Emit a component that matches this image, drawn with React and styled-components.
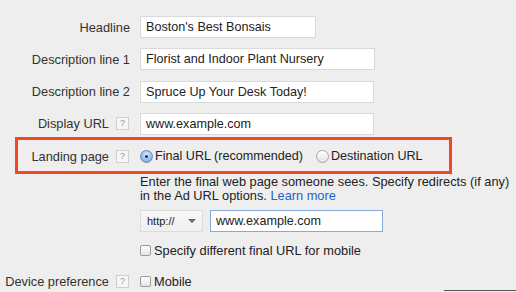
import { styled, createGlobalStyle } from 'styled-components';

const GlobalStyle = createGlobalStyle`
  html, body {
    margin: 0;
    padding: 0;
    background: #eeeeee;
  }
  body {
    font-family: 'Liberation Sans', Arial, sans-serif;
    color: #222;
    -webkit-font-smoothing: antialiased;
  }
`;

const HelpIcon = () => <Help>?</Help>;

const App = () => {
  return (
    <Page>
      <GlobalStyle />
      <Row>
        <Label>Headline</Label>
        <TextInput width={176} defaultValue="Boston's Best Bonsais" />
      </Row>
      <Row>
        <Label>Description line 1</Label>
        <TextInput width={235} defaultValue="Florist and Indoor Plant Nursery" />
      </Row>
      <Row>
        <Label>Description line 2</Label>
        <TextInput width={234} defaultValue="Spruce Up Your Desk Today!" />
      </Row>
      <Row>
        <Label>
          Display URL <HelpIcon />
        </Label>
        <TextInput width={234} defaultValue="www.example.com" />
      </Row>
      <Row highlighted>
        <Label>
          Landing page <HelpIcon />
        </Label>
        <Options>
          <Option>
            <Radio checked />
            Final URL (recommended)
          </Option>
          <Option>
            <Radio />
            Destination URL
          </Option>
        </Options>
      </Row>
      <Indented>
        <HelpText>
          Enter the final web page someone sees. Specify redirects (if any)
          <br />
          in the Ad URL options. <Link href="#">Learn more</Link>
        </HelpText>
        <UrlFields>
          <Select>
            <span>http://</span>
            <Caret />
          </Select>
          <TextInput width={173} focused defaultValue="www.example.com" />
        </UrlFields>
        <CheckRow>
          <Checkbox />
          Specify different final URL for mobile
        </CheckRow>
      </Indented>
      <Row last>
        <Label>
          Device preference <HelpIcon />
        </Label>
        <CheckRow>
          <Checkbox />
          Mobile
        </CheckRow>
        <Edge />
      </Row>
    </Page>
  );
};

export default App;

const Page = styled.div`
  width: 516px;
  height: 292px;
  overflow: hidden;
  padding-top: 16px;
  box-sizing: border-box;
  font-size: 12px;
`;

const Row = styled.div`
  display: flex;
  align-items: center;
  gap: 10px;
  height: ${({ last }) => (last ? '21px' : '22px')};
  margin-bottom: 10.3px;
  margin-top: ${({ highlighted, last }) =>
    highlighted ? '1px' : last ? '9.5px' : '0'};
  position: relative;

  &::before {
    content: '';
    display: ${({ highlighted }) => (highlighted ? 'block' : 'none')};
    position: absolute;
    left: 15px;
    top: -8px;
    width: 437px;
    height: 37px;
    box-sizing: border-box;
    border: 3.5px solid #f2471f;
    pointer-events: none;
  }
`;

const Label = styled.div`
  width: 130px;
  flex-shrink: 0;
  display: flex;
  justify-content: flex-end;
  align-items: center;
  gap: 7px;
  color: #333;
  font-size: 12.8px;
  white-space: nowrap;
`;

const Help = styled.span`
  display: inline-flex;
  align-items: center;
  justify-content: center;
  width: 11px;
  height: 11px;
  border: 1px solid #cfcfcf;
  background: #f6f6f6;
  color: #9a9a9a;
  font-size: 9px;
  line-height: 1;
  margin-right: 1px;
`;

const TextInput = styled.input`
  width: ${({ width }) => width}px;
  height: 22px;
  box-sizing: border-box;
  margin: 0;
  padding: 0 5px;
  border: 1px solid ${({ focused }) => (focused ? '#86a9dc' : '#dadada')};
  background: #fff;
  font-family: 'Liberation Sans', Arial, sans-serif;
  font-size: 12.6px;
  color: #222;
  outline: none;
`;

const Options = styled.div`
  display: flex;
  align-items: center;
  gap: 13px;
`;

const Option = styled.label`
  display: flex;
  align-items: center;
  gap: 2px;
  font-size: 12.6px;
  color: #222;
`;

const Radio = styled.span`
  width: 13px;
  height: 13px;
  border-radius: 50%;
  box-sizing: border-box;
  position: relative;
  border: 1px solid ${({ checked }) => (checked ? '#6f87a8' : '#a5a5a5')};
  background: ${({ checked }) =>
    checked
      ? 'radial-gradient(circle at 50% 35%, #d9ecff 0%, #8cbcf0 60%, #5e96d8 100%)'
      : 'linear-gradient(#ffffff, #e2e2e2)'};

  &::after {
    content: '';
    display: ${({ checked }) => (checked ? 'block' : 'none')};
    position: absolute;
    left: 4px;
    top: 4px;
    width: 3px;
    height: 3px;
    border-radius: 50%;
    background: #1d2a3a;
  }
`;

const Indented = styled.div`
  padding-left: 140px;
  margin-top: -2.3px;
`;

const HelpText = styled.p`
  margin: 0 0 7px;
  font-size: 12.8px;
  line-height: 14px;
  color: #222;
  white-space: nowrap;
`;

const Link = styled.a`
  color: #2164c9;
  text-decoration: none;
`;

const UrlFields = styled.div`
  display: flex;
  align-items: center;
  gap: 7px;
  margin-bottom: 7px;
`;

const Select = styled.div`
  width: 63px;
  height: 22px;
  box-sizing: border-box;
  border: 1px solid #dcdcdc;
  background: linear-gradient(#f8f8f8, #efefef);
  display: flex;
  align-items: center;
  justify-content: space-between;
  padding: 0 6px 0 6px;
  font-size: 11px;
  color: #222;
`;

const Caret = styled.span`
  width: 0;
  height: 0;
  border-left: 4px solid transparent;
  border-right: 4px solid transparent;
  border-top: 4px solid #666;
`;

const CheckRow = styled.label`
  display: flex;
  align-items: center;
  gap: 3px;
  height: 22px;
  font-size: 12.8px;
  color: #222;
`;

const Checkbox = styled.span`
  width: 11px;
  height: 11px;
  box-sizing: border-box;
  border: 1px solid #9c9c9c;
  border-radius: 2px;
  background: linear-gradient(#ffffff, #e6e6e6);
`;

const Edge = styled.div`
  margin-left: auto;
  align-self: flex-end;
  width: 72px;
  height: 1px;
  margin-bottom: 1px;
  background: #555;
`;
